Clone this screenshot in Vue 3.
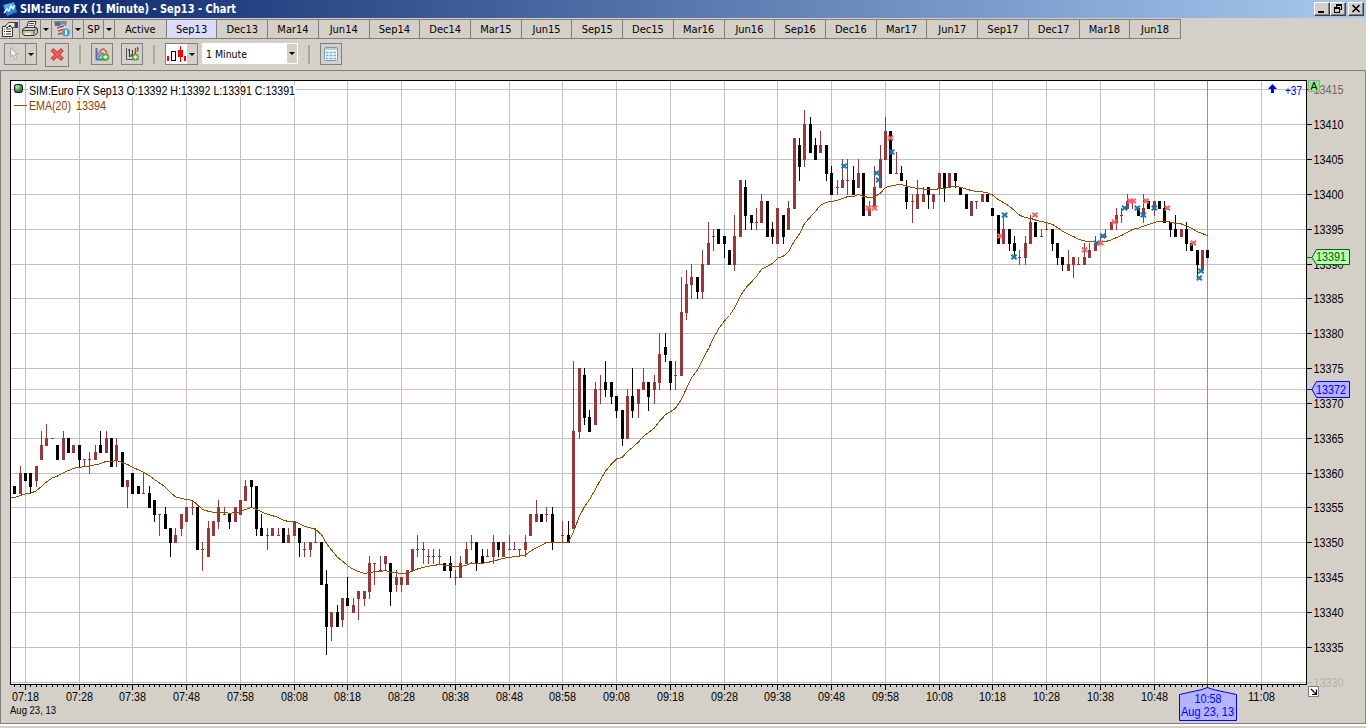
<template>
  <div class="window">
    <!-- Title bar -->
    <div class="title-bar">
      <svg class="app-icon" width="16" height="16" viewBox="0 0 16 16">
        <path d="M1 4 L12 1 L15 11 L5 15 Z" fill="#2f86d0" />
        <path d="M2 4 L11 2 L13 6 L3 9 Z" fill="#59b0ea" />
        <path d="M2 12 L5 8 L7 10 L9 5 L11 8 L13 4" fill="none" stroke="#fff" stroke-width="1.3" />
      </svg>
      <svg class="title-text" width="230" height="18">
        <text x="0" y="13" textLength="216" lengthAdjust="spacingAndGlyphs">SIM:Euro FX (1 Minute) - Sep13 - Chart</text>
      </svg>
      <div class="window-buttons">
        <button class="win-btn">
          <svg width="12" height="11" shape-rendering="crispEdges"><path d="M2 8h6v2h-6z" /></svg>
        </button>
        <button class="win-btn">
          <svg width="12" height="11" shape-rendering="crispEdges">
            <path d="M4 1h6v6h-2v-1h1v-3h-4v1h-1z M2 4h6v6h-6z M3 6v3h4v-3z" fill-rule="evenodd" />
          </svg>
        </button>
        <button class="win-btn close">
          <svg width="12" height="11"><path d="M2.5 2 L9.5 9 M9.5 2 L2.5 9" stroke="#000" stroke-width="1.6" /></svg>
        </button>
      </div>
    </div>

    <!-- Contract tabs -->
    <div class="tab-bar">
      <span class="cell icon-cell">
        <svg width="18" height="18" viewBox="0 0 18 18">
          <path d="M1.5 6.5 h10 v10 h-10 z" fill="#fff" stroke="#333" />
          <path d="M3 9h1M5 9h5M3 11.5h1M5 11.5h5M3 14h1M5 14h5" stroke="#333" />
          <path d="M4 6 L8 2.5 L14 2.5 L14 7 L11 8 L9 5 L6 8 Z" fill="#e8e4dc" stroke="#444" />
          <path d="M14 2h3v6h-3z" fill="#3a3a9c" />
        </svg>
      </span>
      <span class="cell icon-cell">
        <svg width="18" height="18" viewBox="0 0 18 18">
          <path d="M5.5 8 L7.5 1.5 H15 L13 8" fill="#fff" stroke="#333" />
          <path d="M8 3.5h5M7.5 5.5h5" stroke="#555" />
          <path d="M1.5 9.5 L4 7.5 H15.5 L16.5 9 V13 L13.5 15.5 H3 L1.5 13.5 Z" fill="#c9c5bd" stroke="#333" />
          <path d="M2 10.5h11v4M13 10.5l3-2" fill="none" stroke="#444" />
          <path d="M4 13h6v2h-6z" fill="#f5f2a5" />
        </svg>
      </span>
      <span class="cell arrow-cell"><i class="caret"></i></span>
      <span class="cell icon-cell">
        <svg width="18" height="18" viewBox="0 0 18 18">
          <path d="M1 1h13l-1 5h-11z" fill="#7f8b95" />
          <path d="M2 2h5v4h-5z" fill="#47709a" />
          <path d="M4 7 L11 4 L13 9 L7 12 Z" fill="#c9e2f4" />
          <path d="M4 8 l7 -2 M5 11 l7 -2 M5 14 l6 -1" stroke="#c8432b" stroke-width="1.5" />
          <circle cx="13" cy="12.5" r="4" fill="#4e9ddd" />
          <path d="M13 10v5" stroke="#fff" stroke-width="1.6" />
        </svg>
      </span>
      <span class="cell arrow-cell"><i class="caret"></i></span>
      <span class="cell sp-cell">SP</span>
      <span class="cell arrow-cell"><i class="caret"></i></span>
      <div class="tabs">
        <span v-for="tab in tabs" :key="tab" class="tab" :class="{ active: tab === activeTab }" @click="activeTab = tab">{{ tab }}</span>
      </div>
    </div>

    <!-- Chart tools -->
    <div class="tool-bar">
      <div class="tool split">
        <span class="tool-icon">
          <svg width="20" height="20" viewBox="0 0 20 20">
            <path d="M5.5 3.5 L5.5 13 L8 11 L10 15.5 L12 14.5 L10 10.5 L13 10.5 Z" fill="#eee" stroke="#aaa" />
          </svg>
        </span>
        <span class="drop"><i class="caret"></i></span>
      </div>
      <div class="tool delete">
        <svg width="22" height="21" viewBox="0 0 22 21">
          <path d="M6 5.5 L16.5 15.5 M16.5 5.5 L6 15.5" stroke="#c8383c" stroke-width="4" />
          <path d="M6.5 6 L16 15 M16 6 L6.5 15" stroke="#f0605c" stroke-width="2" />
        </svg>
      </div>
      <div class="sep first"></div>
      <div class="tool">
        <svg width="20" height="20" viewBox="0 0 20 20">
          <path d="M4.5 4 V15.5 H15" fill="none" stroke="#3b78c8" stroke-width="2" />
          <path d="M5 12 L9 6 Q12 3 15 9" fill="none" stroke="#df5948" stroke-width="1.6" />
          <path d="M6 14 L10 9 L14 12" fill="none" stroke="#4d83d0" stroke-width="1.5" />
          <circle cx="13.5" cy="13" r="3.8" fill="#58a83f" />
          <path d="M13.5 11v4M11.5 13h4" stroke="#fff" stroke-width="1.3" />
        </svg>
      </div>
      <div class="tool second">
        <svg width="20" height="20" viewBox="0 0 20 20">
          <path d="M4.5 4 V15.5 H12" fill="none" stroke="#555" />
          <path d="M7.5 5 v8 M6 6h2 M8 12h2" stroke="#333" />
          <path d="M10.5 6 v7 M9 11h2" stroke="#333" />
          <path d="M13.5 4 v6 M12 9h2 M15.5 3 v5 M15 5h2" stroke="#cf3022" stroke-width="1.2" />
          <circle cx="13.5" cy="13.2" r="3.5" fill="#58a83f" />
          <path d="M13.5 11.2v4M11.5 13.2h4" stroke="#fff" stroke-width="1.3" />
        </svg>
      </div>
      <div class="sep second-sep"></div>
      <div class="tool split candles">
        <span class="tool-icon">
          <svg width="21" height="20" shape-rendering="crispEdges">
            <rect width="21" height="20" fill="#fff" />
            <rect x="1" y="12" width="2" height="5" fill="#f00" />
            <rect x="5.5" y="7.5" width="4" height="9" fill="#fff" stroke="#000" />
            <path d="M14 2h1v16h-1z M12 6h5v7h-5z M18 12h2v5h-2z" fill="#f00" />
          </svg>
        </span>
        <span class="drop"><i class="caret"></i></span>
      </div>
      <div class="combo">
        <svg width="84" height="21"><text x="4" y="15" textLength="41" lengthAdjust="spacingAndGlyphs">1 Minute</text></svg>
        <span class="combo-arrow"><i class="caret"></i></span>
      </div>
      <div class="sep third"></div>
      <div class="tool grid-tool">
        <svg width="20" height="20" viewBox="0 0 20 20">
          <rect x="3.5" y="3.5" width="13" height="13" rx="1" fill="#f4f9ff" stroke="#6c9bd2" />
          <path d="M4 4h12v2h-12z" fill="#b5d7ba" />
          <path d="M5 8.5h10M5 11.5h10M5 14.5h10" stroke="#7eaadc" stroke-width="1.6" />
          <path d="M8 7v9M12 7v9" stroke="#f4f9ff" />
        </svg>
      </div>
    </div>

    <!-- Price chart -->
    <div class="chart-panel">
      <svg class="chart" width="1364" height="652" viewBox="1 71 1364 652">
        <defs>
          <clipPath id="plot"><rect x="11" y="81" width="1295" height="603" /></clipPath>
          <radialGradient id="led" cx="0.35" cy="0.3" r="0.8">
            <stop offset="0" stop-color="#b8efc0" />
            <stop offset="0.6" stop-color="#3b9048" />
            <stop offset="1" stop-color="#1d5c28" />
          </radialGradient>
        </defs>

        <g shape-rendering="crispEdges">
          <rect x="10" y="80" width="1297" height="605" fill="#000" />
          <rect x="11" y="81" width="1295" height="603" fill="#fff" />
          <rect v-for="p in priceLabels" :key="'g' + p" x="11" :y="priceY(p)" width="1295" height="1" fill="#c0c0c0" />
          <rect v-for="t in timeLabels" :key="'v' + t.m" :x="timeX(t.m)" y="81" width="1" height="603" fill="#c0c0c0" />
          <rect x="11" y="389" width="1295" height="1" fill="#f9b4b4" />
          <rect x="1207" y="81" width="1" height="603" fill="#c08080" />

          <!-- Minute ticks under the plot -->
          <rect v-for="m in 240" :key="'t' + m" :x="timeX(m - 3)" y="685" width="1" height="2" fill="#000" />
          <rect v-for="t in timeLabels" :key="'l' + t.m" :x="timeX(t.m)" y="685" width="1" height="5" fill="#000" />
          <rect v-for="p in priceLabels" :key="'p' + p" x="1307" :y="priceY(p)" width="5" height="1" :fill="p === 13330 ? '#b4b1ab' : '#000'" />
        </g>

        <g clip-path="url(#plot)" shape-rendering="crispEdges">
          <g v-for="c in candles" :key="c.m" :fill="c.color">
            <rect :x="c.x" :y="c.high" width="1" :height="c.low - c.high" />
            <rect :x="c.x - 1" :y="c.top" width="3" :height="c.bottom - c.top" />
          </g>
          <polyline :points="emaPoints" fill="none" stroke="#964b00" stroke-width="1" />
        </g>

        <path v-for="(k, i) in marks" :key="'m' + i" :d="`M${k[1] - 2.6} ${k[2] - 2.3} l5.2 4.6 m0 -4.6 l-5.2 4.6`" :stroke="k[0] === 'b' ? '#1278b4' : '#ff5f64'" stroke-width="2" />

        <!-- Legend -->
        <g shape-rendering="crispEdges" fill="#fff">
          <rect x="28" y="85" width="268" height="12" />
          <rect x="28" y="100" width="79" height="12" />
          <rect x="14" y="105" width="13" height="1" fill="#964b00" />
        </g>
        <rect x="14.5" y="84.5" width="8" height="8" rx="2" fill="url(#led)" stroke="#111" />
        <text x="29" y="95" textLength="266" lengthAdjust="spacingAndGlyphs">SIM:Euro FX Sep13 O:13392 H:13392 L:13391 C:13391</text>
        <text x="29" y="110" textLength="42" lengthAdjust="spacingAndGlyphs" fill="#8b4000">EMA(20)</text>
        <text x="76" y="110" textLength="30" lengthAdjust="spacingAndGlyphs" fill="#8b4000">13394</text>
        <path d="M1272.5 84 l4.5 5 h-3 v4 h-3 v-4 h-3 z" fill="#00f" />
        <text x="1285" y="95" textLength="17" lengthAdjust="spacingAndGlyphs" fill="#00f">+37</text>

        <!-- Price axis -->
        <text v-for="p in priceLabels" :key="'pt' + p" x="1313.5" :y="priceY(p) + 5" textLength="30" lengthAdjust="spacingAndGlyphs" :fill="priceFill(p)">{{ p }}</text>
        <rect x="1308.5" y="80.5" width="11" height="11" fill="#90ee90" stroke="#a0a0a0" />
        <text x="1310.5" y="90" textLength="7" lengthAdjust="spacingAndGlyphs" class="small">A</text>

        <path d="M1306 257.5 h6" stroke="#060" />
        <path d="M1312 257.5 L1316.5 249.5 H1349.5 V264.5 H1316.5 Z" fill="#b4ffb4" stroke="#006400" />
        <text x="1316" y="261" textLength="30" lengthAdjust="spacingAndGlyphs" fill="#006400">13391</text>
        <path d="M1306 389.5 h6" stroke="#00f" />
        <path d="M1312 389.5 L1316.5 381.5 H1349.5 V397.5 H1316.5 Z" fill="#b4b4ff" stroke="#00f" />
        <text x="1316" y="394" textLength="30" lengthAdjust="spacingAndGlyphs" fill="#00f">13372</text>

        <!-- Time axis -->
        <text v-for="t in timeLabels" :key="'tt' + t.m" :x="timeX(t.m) - 13" y="701" textLength="27" lengthAdjust="spacingAndGlyphs">{{ t.label }}</text>
        <text x="10" y="714" textLength="46" lengthAdjust="spacingAndGlyphs" class="small">Aug 23, 13</text>
        <path d="M1179.5 694.5 L1202 689.5 L1207.5 687.5 L1213 689.5 L1236.5 694.5 V720.5 H1179.5 Z" fill="#b4b4ff" stroke="#00f" />
        <path d="M1207.5 684 v4" stroke="#00f" />
        <text x="1194.5" y="703" textLength="27" lengthAdjust="spacingAndGlyphs" fill="#00f">10:58</text>
        <text x="1181" y="716" textLength="53" lengthAdjust="spacingAndGlyphs" fill="#00f">Aug 23, 13</text>
        <rect x="1308.5" y="686.5" width="10" height="10" fill="#fff" stroke="#808080" />
        <path d="M1311 689 l5 5 M1312 694.5 h4.5 v-5" fill="none" stroke="#000" stroke-width="1.2" />
      </svg>
    </div>
  </div>
</template>

<script setup>
import { ref } from 'vue'

const tabs = ['Active', 'Sep13', 'Dec13', 'Mar14', 'Jun14', 'Sep14', 'Dec14', 'Mar15', 'Jun15', 'Sep15', 'Dec15',
  'Mar16', 'Jun16', 'Sep16', 'Dec16', 'Mar17', 'Jun17', 'Sep17', 'Dec17', 'Mar18', 'Jun18']
const activeTab = ref('Sep13')

// One bar per minute, first one is 07:15. high,top,bottom,low above 13300, b = down bar, r = up bar
const bars = `
r58,58,57,57 b58,58,57,57 r61,60,57,57 b60,60,59,59 b60,60,58,57 r61,61,59,58 r66,64,62,62 r67,65,64,64
r65,65,65,65 b64,64,62,62 r66,65,62,62 b65,65,63,63 r64,64,63,63 b64,64,62,61 r62,62,62,61 r63,62,62,60
r64,63,62,62 b66,64,63,63 r66,65,63,63 b65,65,61,61 r65,64,62,61 b63,63,58,58 r59,59,58,55 b60,60,57,57
b58,58,57,57 r60,57,57,57 b58,57,55,55 b56,56,54,53 r54,54,54,51 b55,54,52,52 b52,52,50,48 r52,51,50,50
r54,54,52,51 r55,55,53,53 r56,55,55,54 b55,55,49,49 r50,49,49,46 r53,52,48,48 r53,53,51,51 r56,55,53,52
r55,54,54,54 b54,54,53,52 r55,55,53,53 r56,56,54,54 r59,58,56,56 b59,59,58,55 b58,58,52,51 b54,52,51,51
r52,51,51,49 r52,52,51,51 r52,51,51,51 b52,52,50,50 r52,51,50,50 r53,53,51,51 b52,52,50,48 r50,49,49,48
r50,50,49,48 r52,50,50,50 b50,50,44,44 b46,44,38,34 r40,40,38,36 b41,40,38,38 r42,42,39,38 b45,42,41,41
r42,41,40,40 r43,43,42,39 r43,43,42,41 r48,47,43,42 r47,47,47,44 r48,46,46,46 r48,48,47,46 b47,47,43,41
r46,45,44,43 r45,45,44,43 r46,46,44,44 r49,49,46,46 r51,49,49,48 r50,49,49,47 r49,48,48,47 r49,48,48,47
r49,48,48,47 b47,47,46,46 b48,47,46,45 r46,45,45,44 r48,47,45,45 r50,49,47,47 r51,50,50,49 b50,50,47,46
b49,48,47,47 r49,48,48,48 r51,50,48,47 b50,50,49,48 r50,50,48,48 r51,49,49,49 r50,49,49,49 r49,49,49,48
r51,50,49,48 r54,54,51,51 r56,54,53,53 b54,54,53,53 r55,54,54,53 b55,54,50,49 r50,50,50,50 r53,51,51,50
b53,51,50,50 r76,66,52,52 r75,75,66,65 b75,74,68,67 b69,68,66,66 r73,72,67,67 r74,72,72,70 b76,73,72,71
b73,73,71,70 b71,71,69,68 b69,69,65,64 r72,71,65,65 b75,71,69,68 r72,72,70,68 r75,73,72,72 b73,73,71,69
r74,73,72,70 r80,77,73,72 b80,78,77,76 b76,76,73,72 r76,74,74,72 r88,83,74,74 r89,87,83,82 r90,88,87,85
b88,88,86,85 r92,90,86,85 r96,93,90,90 r95,94,94,92 b95,95,93,93 b94,94,93,91 b92,92,90,90 r97,94,90,89
r102,102,94,94 b102,101,97,95 b97,97,96,95 r98,96,96,95 r100,99,96,96 b99,99,94,94 b96,95,94,93 r98,98,93,93
b97,97,94,93 r99,98,95,95 r108,108,98,98 b108,107,104,102 r112,110,105,104 b111,110,106,106 b108,107,105,105 r109,107,106,106
b107,107,103,102 b104,103,100,100 r102,101,101,100 r105,102,101,101 r105,102,102,100 b104,102,100,100 r105,103,101,101 b103,103,97,97
r99,98,97,97 r104,101,98,98 r107,105,101,101 r111,109,105,105 b109,109,103,103 r106,103,103,103 b104,103,102,102 b102,101,99,98
r100,99,99,96 r102,100,98,98 r101,100,99,99 b101,101,100,98 r100,100,99,98 r103,103,101,100 b103,103,101,99 r103,103,101,101
b103,103,102,101 b101,101,100,100 b100,100,98,98 r99,99,97,97 r99,99,99,98 r100,100,99,99 b100,100,99,99 b98,98,97,97
b97,97,93,93 r97,95,93,93 b95,95,93,92 b94,93,92,91 r92,91,91,90 r94,93,91,90 r97,96,93,93 b96,96,94,94
r95,94,94,94 r96,95,95,95 b95,95,93,92 b93,93,91,90 b91,91,90,89 r92,90,89,89 r91,91,90,88 r91,90,90,90
r93,91,90,90 r93,92,91,91 r94,93,92,92 r94,93,93,93 r95,94,94,94 r96,96,95,95 r98,97,96,95 r98,97,97,96
r100,99,98,98 r99,99,99,98 b98,98,97,97 r100,98,97,96 b99,99,98,98 r99,99,98,97 b99,99,98,98 b99,98,96,96
b96,96,95,94 b97,95,94,94 r95,95,94,94 b96,95,93,92 b93,93,92,92 b92,92,90,88 r92,92,89,89 b92,92,91,91
`.trim().split(/\s+/)

// Trade marks: b = buy, r = sell
const marks = [
  ['b', 844, 166], ['b', 876.7, 173], ['b', 878.7, 180], ['r', 868.5, 208], ['r', 874.5, 208], ['r', 890.5, 138],
  ['b', 891.7, 152], ['b', 1004.7, 215], ['r', 1000, 236], ['b', 1014, 257], ['r', 1035, 215], ['r', 1084.7, 249.7],
  ['b', 1096.7, 243], ['r', 1100.7, 243], ['b', 1102.7, 236], ['r', 1114.5, 222], ['b', 1124.7, 208], ['r', 1130, 201],
  ['r', 1133.3, 201], ['b', 1137.3, 208], ['b', 1143.3, 215], ['r', 1146, 201], ['b', 1154.3, 208], ['r', 1167.3, 208],
  ['r', 1193.3, 243], ['b', 1201, 271], ['b', 1199.3, 278]
]

const timeX = (m) => Math.floor(25.45 + m * 5.375)          // m = minutes after 07:18
const priceY = (p) => Math.floor(89.85 + (13415 - p) * 6.967)

const candles = bars.map((bar, i) => {
  const [high, top, bottom, low] = bar.slice(1).split(',').map((n) => priceY(13300 + Number(n)))
  return {
    m: i - 3,
    x: timeX(i - 3),
    high,
    top,
    bottom: bottom + 1,
    low: low + 1,
    color: bar[0] === 'r' ? '#963838' : '#000'
  }
})

// EMA(20) over the closes
let ema = 56.5
const emaPoints = bars.map((bar, i) => {
  const [, top, bottom] = bar.slice(1).split(',').map(Number)
  const close = bar[0] === 'r' ? top : bottom
  if (i > 0) ema += (close - ema) * 2 / 21
  return `${timeX(i - 3) + 0.5},${(90.35 + (115 - ema) * 6.967).toFixed(1)}`
}).join(' ')

const priceLabels = []
for (let p = 13415; p >= 13330; p -= 5) priceLabels.push(p)

const priceFill = (p) => {
  if (p === 13415) return '#6a6862'
  return p === 13330 ? '#b4b1ab' : '#000'
}

const pad = (n) => String(n).padStart(2, '0')

const timeLabels = []
for (let m = 0; m <= 230; m += 10) {
  const total = 7 * 60 + 18 + m
  if (m === 220) continue                                   // covered by the current time tag
  timeLabels.push({ m, label: `${pad(Math.floor(total / 60))}:${pad(total % 60)}` })
}
</script>

<style>
body {
  margin: 0;
  overflow: hidden;
}
</style>

<style scoped>
.window {
  width: 1366px;
  height: 728px;
  background: #d4d0c8;
  font-family: "Liberation Sans", Arial, sans-serif;
  font-size: 12px;
  color: #000;
  display: flex;
  flex-direction: column;
}
.title-bar {
  height: 18px;
  display: flex;
  align-items: center;
  background: linear-gradient(to right, #0a246a, #a6caf0);
}
.app-icon {
  margin: 0 2px;
}
.title-text text {
  font: bold 12px "DejaVu Sans Condensed", "DejaVu Sans", sans-serif;
  fill: #fff;
}
.window-buttons {
  margin-left: auto;
  margin-right: 2px;
  display: flex;
}
.win-btn {
  width: 16px;
  height: 14px;
  padding: 0 0 0 1px;
  display: flex;
  background: #d4d0c8;
  border: 1px solid;
  border-color: #fff #404040 #404040 #fff;
  box-shadow: inset -1px -1px #808080;
  box-sizing: border-box;
}
.win-btn.close {
  margin-left: 2px;
}
.tab-bar {
  height: 20px;
  margin-top: 1px;
  display: flex;
}
.cell {
  height: 20px;
  box-sizing: border-box;
  border: 1px solid #808080;
  border-left: none;
  display: flex;
  align-items: center;
  justify-content: center;
}
.icon-cell {
  width: 21px;
}
.icon-cell:first-child {
  width: 20px;
}
.arrow-cell {
  width: 11px;
}
.sp-cell {
  width: 20px;
}
.caret {
  border: 3px solid transparent;
  border-top-color: #000;
  border-bottom: none;
}
.tabs {
  width: 1065px;
  display: grid;
  grid-template-columns: repeat(21, 1fr);
  border-right: 1px solid #808080;
}
.tab {
  border: 1px solid #808080;
  border-right: none;
  display: flex;
  align-items: center;
  justify-content: center;
}
.tab,
.sp-cell {
  font-family: "DejaVu Sans Condensed", "DejaVu Sans", sans-serif;
  font-size: 11px;
}
.tab:first-child {
  border-left: none;
}
.tab.active {
  background: #dcdcfa;
}
.tool-bar {
  height: 31px;
  padding: 4px 0 0 4px;
  box-sizing: border-box;
  display: flex;
  align-items: flex-start;
}
.tool {
  width: 22px;
  height: 22px;
  box-sizing: border-box;
  border: 1px solid #808080;
  display: flex;
}
.tool.split {
  width: 33px;
}
.tool-icon {
  flex: 1;
  display: flex;
}
.drop {
  width: 10px;
  border-left: 1px solid #808080;
  display: flex;
  align-items: center;
  justify-content: center;
}
.tool.delete {
  width: 24px;
  height: 24px;
  margin-left: 8px;
}
.tool.second {
  margin-left: 8px;
}
.tool.grid-tool {
  margin-left: 10px;
}
.sep {
  width: 2px;
  height: 19px;
  margin-top: 2px;
  background: #aaa7a1;
}
.sep.first,
.sep.second-sep {
  margin: 2px 10px 0;
}
.sep.third {
  margin-left: 10px;
}
.candles .tool-icon {
  flex: none;
  width: 21px;
}
.candles .drop {
  border-left: none;
}
.combo {
  width: 96px;
  height: 21px;
  margin-left: 4px;
  background: #fff;
  display: flex;
  justify-content: space-between;
}
.combo text {
  font-family: "DejaVu Sans Condensed", "DejaVu Sans", sans-serif;
  font-size: 11px;
}
.combo-arrow {
  width: 10px;
  margin: 1px;
  background: #d4d0c8;
  display: flex;
  align-items: center;
  justify-content: center;
}
.chart-panel {
  height: 654px;
  box-sizing: border-box;
  border: 1px solid #808080;
  box-shadow: 0 2px #fff;
}
.chart {
  display: block;
}
.chart text {
  font-size: 12px;
}
.chart .small {
  font-size: 11px;
}
</style>
